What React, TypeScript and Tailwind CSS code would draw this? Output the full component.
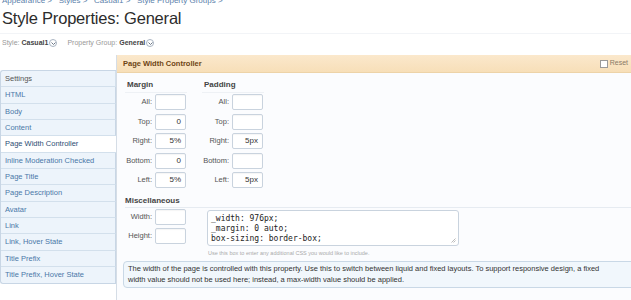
const navItems = [
  "HTML",
  "Body",
  "Content",
  "Page Width Controller",
  "Inline Moderation Checked",
  "Page Title",
  "Page Description",
  "Avatar",
  "Link",
  "Link, Hover State",
  "Title Prefix",
  "Title Prefix, Hover State",
]

const margin = [
  { label: "All:", value: "" },
  { label: "Top:", value: "0" },
  { label: "Right:", value: "5%" },
  { label: "Bottom:", value: "0" },
  { label: "Left:", value: "5%" },
]

const padding = [
  { label: "All:", value: "" },
  { label: "Top:", value: "" },
  { label: "Right:", value: "5px" },
  { label: "Bottom:", value: "" },
  { label: "Left:", value: "5px" },
]

function DropCircle() {
  return (
    <span className="ml-[1px] inline-flex h-[8px] w-[8px] items-center justify-center rounded-full border border-[#a9b4c2] bg-white">
      <svg width="5" height="3" viewBox="0 0 5 3">
        <path d="M0.5 0.5 L2.5 2.5 L4.5 0.5" stroke="#6b7787" strokeWidth="1" fill="none" />
      </svg>
    </span>
  )
}

function Field({ value }: { value: string }) {
  return (
    <div className="h-[16px] w-[31px] rounded-[2px] border border-[#c9d3de] bg-white pr-[4px] text-right text-[8px] leading-[14px] text-[#333] shadow-[inset_0_1px_1px_rgba(0,0,0,0.04)]">
      {value}
    </div>
  )
}

function Group({ title, rows }: { title: string; rows: { label: string; value: string }[] }) {
  return (
    <div className="flex w-[62px] flex-col">
      <div className="mb-[1px] border-b border-[#eef1f5] pb-[1px] pl-[2px] text-[8px] font-bold text-[#444]">{title}</div>
      <div className="flex flex-col gap-[3.5px]">
        {rows.map((r) => (
          <div key={r.label} className="flex items-center">
            <span className="w-[30px] pr-[3px] text-right text-[7.5px] text-[#555]">{r.label}</span>
            <Field value={r.value} />
          </div>
        ))}
      </div>
    </div>
  )
}

export default function App() {
  return (
    <div
      className="h-[300px] w-[631px] overflow-hidden bg-white text-[#333]"
      style={{ fontFamily: '"Liberation Sans", Arial, sans-serif' }}
    >
      <div className="-mt-[4px] pl-[2px] text-[8px] leading-[10px] text-[#5b7fab]">
        Appearance &gt;&nbsp;&nbsp; Styles &gt;&nbsp;&nbsp; Casual1 &gt;&nbsp;&nbsp; Style Property Groups &gt;
      </div>
      <h1 className="pl-[2px] text-[16.5px] leading-[24px] tracking-[-0.2px] text-[#2c2c2c]">Style Properties: General</h1>
      <div className="mt-[3px] border-t border-[#f2f4f7]" />
      <div className="mt-[4px] flex h-[10px] items-center pl-[2px] text-[7px] text-[#999]">
        <span>Style:</span>
        <span className="ml-[2px] font-bold text-[#444]">Casual1</span>
        <DropCircle />
        <span className="ml-[10px]">Property Group:</span>
        <span className="ml-[2px] font-bold text-[#444]">General</span>
        <DropCircle />
      </div>

      <div className="mt-[7px] flex items-start">
        <div className="mt-[15px] w-[116px] shrink-0 overflow-hidden rounded-l-[3px] border border-r-0 border-[#c8d6e5] bg-[#edf4fb] text-[7.5px]">
          <div className="flex h-[16.33px] items-center border-b border-r border-[#d3e0ec] pl-[4px] text-[#555]">Settings</div>
          {navItems.map((n, i) => {
            const active = n === "Page Width Controller"
            return (
              <div
                key={n}
                className={`flex h-[16.33px] items-center pl-[4px] ${
                  i < navItems.length - 1 ? "border-b border-[#d3e0ec]" : ""
                } ${active ? "relative z-10 -mr-px bg-white text-[#2c4d74]" : "border-r border-r-[#c8d6e5] text-[#4a78a8]"}`}
              >
                {n}
              </div>
            )
          })}
        </div>

        <div className="flex h-[245px] flex-1 flex-col border-l border-[#d5dde6] bg-[#fbfcfe]">
          <div className="flex h-[18px] items-center justify-between border-b border-[#edd3a8] bg-gradient-to-b from-[#fbe8cc] to-[#f7dfb8] pl-[6px] pr-[3px]">
            <span className="text-[7.5px] font-bold text-[#6e4514]">Page Width Controller</span>
            <span className="flex items-center text-[7px] text-[#8a7a66]">
              <span className="mr-[2px] h-[8px] w-[8px] border border-[#9a9a9a] bg-white" />
              Reset
            </span>
          </div>

          <div className="flex flex-col pl-[8px] pt-[6px]">
            <div className="flex gap-[15px]">
              <Group title="Margin" rows={margin} />
              <Group title="Padding" rows={padding} />
            </div>

            <div className="mt-[8px] border-b border-[#e6ebf1] pb-[1px] text-[8px] font-bold leading-[10px] text-[#444]">Miscellaneous</div>
            <div className="mt-[1px] flex">
              <div className="flex flex-col gap-[3px]">
                <div className="flex items-center">
                  <span className="w-[30px] pr-[3px] text-right text-[7.5px] text-[#555]">Width:</span>
                  <Field value="" />
                </div>
                <div className="flex items-center">
                  <span className="w-[30px] pr-[3px] text-right text-[7.5px] text-[#555]">Height:</span>
                  <Field value="" />
                </div>
              </div>
              <div className="ml-[21px] mt-[1px] flex flex-col">
                <div
                  className="relative h-[36px] w-[252px] rounded-[3px] border border-[#c9d3de] bg-white pl-[3px] pt-[3px] text-[8px] leading-[10px] text-[#222]"
                  style={{ fontFamily: '"DejaVu Sans Mono", "Liberation Mono", monospace' }}
                >
                  <div>_width: 976px;</div>
                  <div>_margin: 0 auto;</div>
                  <div>box-sizing: border-box;</div>
                  <svg className="absolute bottom-[2px] right-[2px]" width="5" height="5" viewBox="0 0 5 5">
                    <path d="M4.5 0.5 L0.5 4.5 M4.5 2.5 L2.5 4.5" stroke="#aaa" strokeWidth="0.8" />
                  </svg>
                </div>
                <div className="mt-[3px] pl-[1px] text-[5.5px] leading-[8px] text-[#aaa]">Use this box to enter any additional CSS you would like to include.</div>
              </div>
            </div>
          </div>

          <div className="-mr-[4px] ml-[6px] mt-[4px] rounded-[4px] border border-[#c9d8e6] bg-[#f1f7fc] py-[2px] pl-[4px] pr-[26px] text-[7.5px] leading-[10.5px] text-[#333]">
            The width of the page is controlled with this property. Use this to switch between liquid and fixed layouts. To support responsive design, a fixed width value should not be used here; instead, a max-width value should be applied.
          </div>
        </div>
      </div>
    </div>
  )
}
